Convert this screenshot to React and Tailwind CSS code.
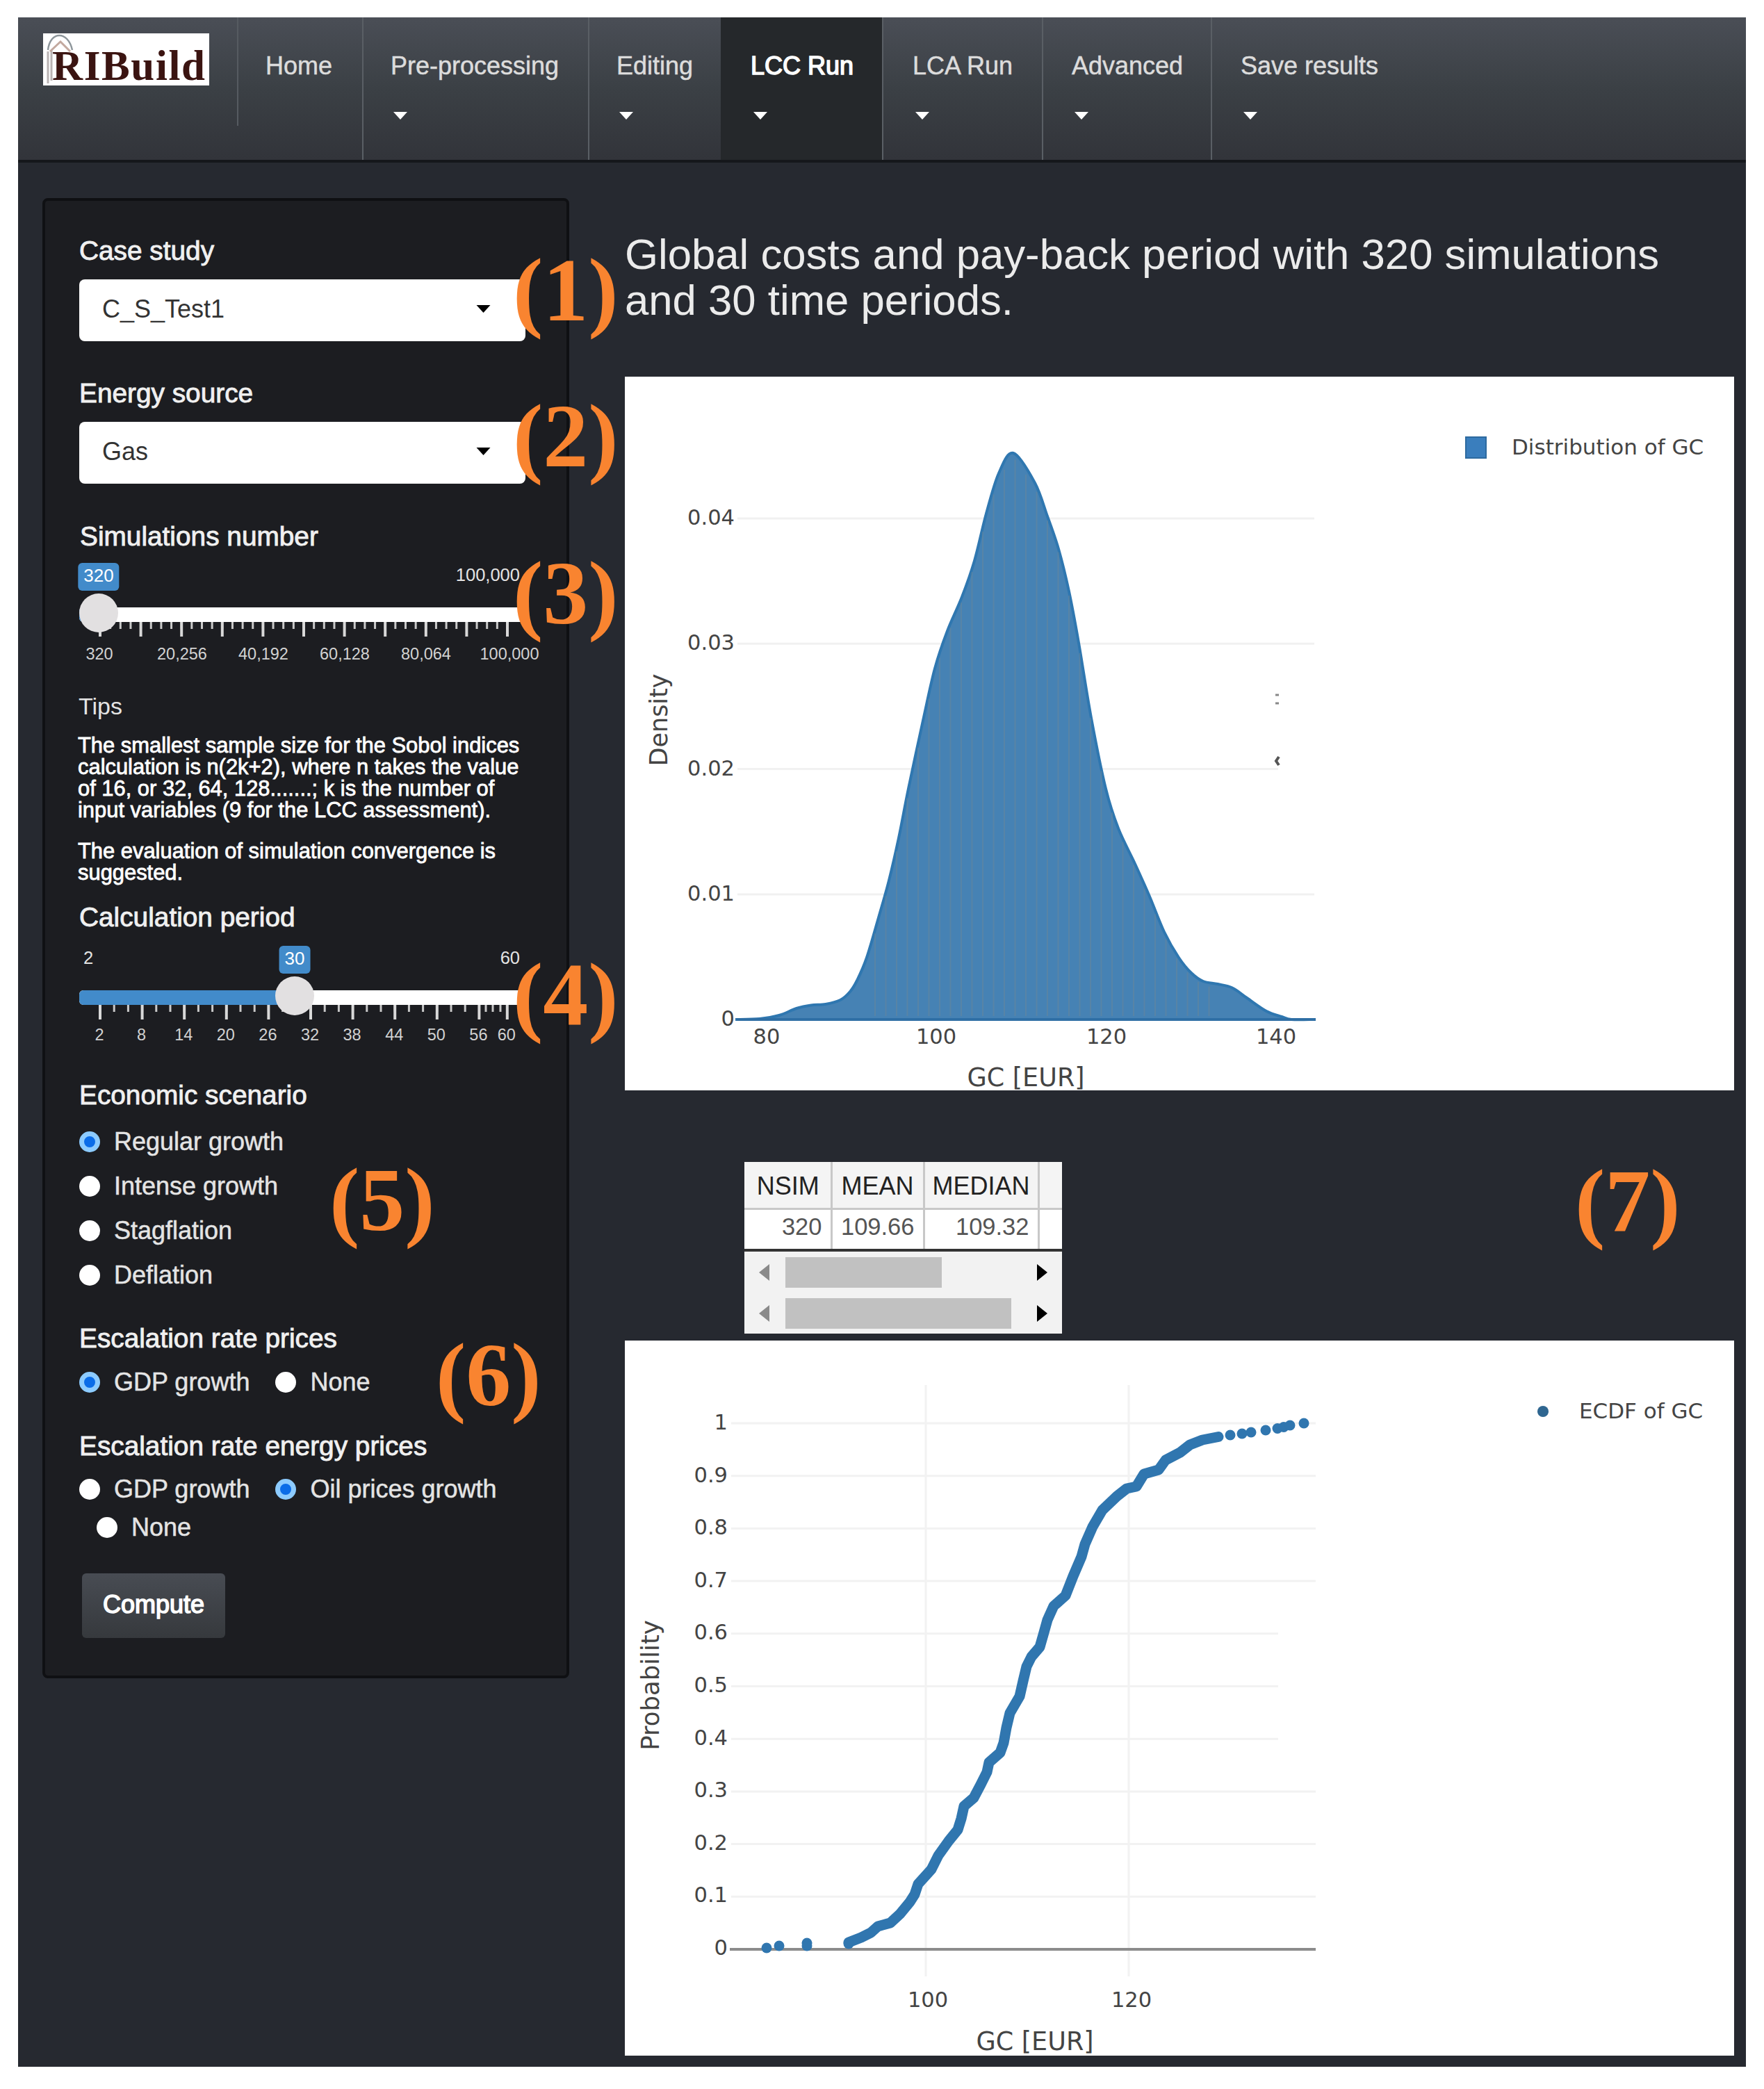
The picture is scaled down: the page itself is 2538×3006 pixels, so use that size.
import React, { useState } from 'react';

const navItems = [
  { name: 'Home', width: 'w-[180px]', menu: false },
  { name: 'Pre-processing', width: 'w-[325px]', menu: true },
  { name: 'Editing', width: 'w-[191px]', menu: true },
  { name: 'LCC Run', width: 'w-[232px]', menu: true },
  { name: 'LCA Run', width: 'w-[230px]', menu: true },
  { name: 'Advanced', width: 'w-[243px]', menu: true },
  { name: 'Save results', width: 'w-[300px]', menu: true },
];

const densityPoints = [
  [159, 925], [194, 924], [222, 919], [247, 909], [268, 904.5], [289, 903], [310, 897], [324, 885],
  [334, 869], [348, 836], [366, 775], [380, 725], [394, 664], [408, 593], [429, 495], [446, 420],
  [464, 366], [485, 317], [503, 265], [520, 197], [538, 139], [559, 110],
  [590, 153], [608, 201], [624, 248], [639, 309], [653, 383], [671, 491], [692, 593], [710, 650],
  [734, 701], [755, 748], [776, 799], [797, 836], [815, 858], [832, 870], [853, 874], [874, 879.5],
  [895, 894], [923, 913], [945, 921], [959, 925], [992, 925],
];

const ecdfLine = [
  [320, 866], [338, 859], [352, 852], [362, 843], [380, 838], [394, 825], [408, 808], [415, 797],
  [420, 782], [439, 761], [449, 741], [464, 720], [477, 704], [482, 688], [486, 670], [500, 658],
  [510, 639], [519, 621], [522, 607], [538, 593], [543, 579], [547, 557], [552, 536], [566, 512],
  [571, 490], [576, 469], [583, 455], [595, 441], [601, 420], [606, 402], [615, 382], [632, 367],
  [643, 339], [655, 311], [660, 293], [671, 268], [685, 244], [706, 224], [720, 213], [734, 210],
  [745, 192], [766, 186], [776, 172], [797, 161], [811, 150], [829, 143], [852, 138.5],
];

const ecdfDots = [
  [202, 874], [220, 871], [260, 867], [260, 871], [320, 868], [869, 136], [886, 134], [899, 132], [920, 129],
  [937, 126.5], [946, 124.5], [955, 122], [975, 119],
];

// Catmull-Rom spline through the points
const smoothPath = (pts) => {
  let d = `M${pts[0][0]} ${pts[0][1]}`;
  for (let i = 0; i < pts.length - 1; i++) {
    const p0 = pts[i - 1] || pts[i];
    const p1 = pts[i];
    const p2 = pts[i + 1];
    const p3 = pts[i + 2] || p2;
    d += ` C${p1[0] + (p2[0] - p0[0]) / 6} ${p1[1] + (p2[1] - p0[1]) / 6} ${p2[0] - (p3[0] - p1[0]) / 6} ${p2[1] - (p3[1] - p1[1]) / 6} ${p2[0]} ${p2[1]}`;
  }
  return d;
};

const Caret = ({ className }) => (
  <svg viewBox="0 0 20 11" className={className}>
    <path d="M0 0H20L10 11Z" fill="currentColor" />
  </svg>
);

const Logo = () => (
  <svg width="239" height="75" viewBox="0 0 239 75" className="overflow-visible bg-white">
    <path d="M7 72V26M12 68V24" stroke="#b9b3b3" strokeWidth="3" />
    <path d="M7 24C10 -4 36 -4 42 24" fill="none" stroke="#8e969b" strokeWidth="2.5" />
    <path d="M10 26L25 12L39 26" fill="none" stroke="#c3a99f" strokeWidth="3" />
    <text x="13" y="67" fontSize="61" textLength="220" fill="#3b1411" fontWeight="bold" fontFamily="'Liberation Serif', serif">
      RIBuild
    </text>
  </svg>
);

const Label = ({ children, className }) => (
  <div className={`h-10 leading-10 text-[38.8px] text-[#f0f0f0] whitespace-nowrap [-webkit-text-stroke:0.9px_#f0f0f0] ${className}`}>
    {children}
  </div>
);

const Select = ({ value }) => (
  <div className="mt-[21px] flex h-[89px] w-[642px] items-center justify-between rounded-lg bg-white pr-[50px] pb-1 pl-[33px] text-[36px] text-[#333]">
    <span>{value}</span>
    <Caret className="h-[11px] w-[21px] text-black" />
  </div>
);

const Radio = ({ label, checked, onChange }) => (
  <label className="flex h-10 items-center gap-5 text-[36px] leading-10 whitespace-nowrap text-[#e4e4e4] [-webkit-text-stroke:0.5px_#e4e4e4]">
    <input type="radio" className="sr-only" checked={checked} onChange={onChange} />
    {checked ? (
      <span className="size-[30px] rounded-full border-[7px] border-[#8ccbff] bg-[#0a6ce8]" />
    ) : (
      <span className="size-[30px] rounded-full bg-white" />
    )}
    {label}
  </label>
);

const Slider = ({ min, max, value, position, majors, minors, labels, labelY, className }) => (
  <div className={`relative w-[642px] ${className}`}>
    <div className="flex h-[38px] items-center justify-between pr-2 pb-2 pl-1.5 text-[25.5px] text-[#e4e4e4]">
      <span>{min}</span>
      <span>{max}</span>
    </div>
    <div className="mt-6 h-[21px] rounded-md bg-white">
      <div className="h-full rounded-l-md bg-[#428bca]" style={{ width: position }} />
    </div>
    <svg width="660" height="60" className="block overflow-visible">
      {minors.map((x) => (
        <path key={x} d={`M${x} 0V10`} stroke="#c9c9c9" strokeWidth="3" />
      ))}
      {majors.map((x) => (
        <path key={x} d={`M${x} 0V21`} stroke="#d8d8d8" strokeWidth="4" />
      ))}
      {labels.map(([x, text]) => (
        <text key={text} x={x} y={labelY} textAnchor="middle" fontSize="23.5" fill="#d2d2d2">
          {text}
        </text>
      ))}
    </svg>
    {/* value bubble and handle sit over the track */}
    <div
      className="absolute -top-0.5 flex h-[40px] -translate-x-1/2 items-center rounded-md bg-[#428bca] px-2 pb-1 text-[26px] leading-none text-white"
      style={{ left: position }}
    >
      {value}
    </div>
    <div className="absolute top-[42px] size-[56px] -translate-x-1/2 rounded-full bg-[#e2e0e1]" style={{ left: position }} />
  </div>
);

const simMajors = Array.from({ length: 11 }, (_, i) => 30 + i * 58.6);
const simMinors = Array.from({ length: 40 }, (_, i) => 30 + i * 14.65);
const simLabels = [[29, '320'], [148, '20,256'], [265, '40,192'], [382, '60,128'], [499, '80,064'], [619, '100,000']];

const yearLabels = ['2', '8', '14', '20', '26', '32', '38', '44', '50', '56', '60'].map((t) => [29 + (Number(t) - 2) * 10.1, t]);
const yearMajors = yearLabels.map(([x]) => x + 1);
const yearMinors = [...Array.from({ length: 27 }, (_, i) => 30 + i * 20.2).filter((x) => x < 570), 585, 595, 606];

const DensityChart = () => (
  <svg width="1596" height="1027" viewBox="0 0 1596 1027" className="mt-[77px] block bg-white" fontFamily="'DejaVu Sans', Verdana, sans-serif" fill="#444">
    {['0.04', '0.03', '0.02', '0.01', '0'].map((t, i) => (
      <g key={t}>
        {t !== '0' && <path d={`M162 ${204 + i * 180.3}H${t === '0.02' ? 940 : 992}`} stroke="#f1f1f1" strokeWidth="3" />}
        <text x="158" y={213 + i * 180.3} textAnchor="end" fontSize="30.5">{t}</text>
      </g>
    ))}
    <path d={smoothPath(densityPoints)} fill="#4682b4" stroke="#2f77b0" strokeWidth="4" />
    <path d="M161 925H994" stroke="#2f6fa5" strokeWidth="4" />
    {Array.from({ length: 32 }, (_, i) => 360 + i * 15.5).map((x) => {
      const next = densityPoints.findIndex((p) => p[0] > x);
      const [ax, ay] = densityPoints[next - 1];
      const [bx, by] = densityPoints[next];
      return <path key={x} d={`M${x} ${ay + ((by - ay) * (x - ax)) / (bx - ax) + 6}V920`} stroke="#6f8796" strokeWidth="2" opacity="0.45" />;
    })}
    {[[204, '80'], [448, '100'], [693, '120'], [937, '140']].map(([x, t]) => (
      <text key={t} x={x} y="960" textAnchor="middle" fontSize="30.5">{t}</text>
    ))}
    <text x="577" y="1021" textAnchor="middle" fontSize="36.5">GC [EUR]</text>
    <text transform="translate(61 494) rotate(-90)" textAnchor="middle" fontSize="35">Density</text>
    <path d="M936 458H941M936 470H941" stroke="#888" strokeWidth="3" />
    <path d="M941 547L937 553L941 559" fill="none" stroke="#555" strokeWidth="4" />
    <rect x="1210" y="87" width="29" height="30" fill="#3a7ebd" stroke="#2d6a9f" strokeWidth="2" />
    <text x="1276" y="112" fontSize="31">Distribution of GC</text>
  </svg>
);

const EcdfChart = () => (
  <svg width="1596" height="1029" viewBox="0 0 1596 1029" className="mt-[10px] block bg-white" fontFamily="'DejaVu Sans', Verdana, sans-serif" fill="#444">
    <path d="M433 64V915M725 64V915" stroke="#f2f2f2" strokeWidth="3" />
    {['1', '0.9', '0.8', '0.7', '0.6', '0.5', '0.4', '0.3', '0.2', '0.1', '0'].map((t, i) => (
      <g key={t}>
        {t !== '0' && <path d={`M153 ${119 + i * 75.7}H${i > 3 && i < 7 ? 940 : 994}`} stroke="#f2f2f2" strokeWidth="3" />}
        <text x="148" y={128 + i * 75.6} textAnchor="end" fontSize="30.5">{t}</text>
      </g>
    ))}
    <path d="M151 876H994" stroke="#8c8c8c" strokeWidth="4" />
    <g transform="translate(2 0)">
      <path d={`M${ecdfLine.map((p) => p.join(' ')).join('L')}`} fill="none" stroke="#3076af" strokeWidth="15" strokeLinecap="round" strokeLinejoin="round" />
      {ecdfDots.map(([x, y]) => (
        <circle key={`${x}-${y}`} cx={x} cy={y} r="7.5" fill="#3076af" />
      ))}
    </g>
    <text x="436" y="959" textAnchor="middle" fontSize="30.5">100</text>
    <text x="729" y="959" textAnchor="middle" fontSize="30.5">120</text>
    <text x="590" y="1021" textAnchor="middle" fontSize="36.5">GC [EUR]</text>
    <text transform="translate(49 496) rotate(-90)" textAnchor="middle" fontSize="35.5">Probability</text>
    <circle cx="1321" cy="102" r="8" fill="#2f6690" />
    <text x="1373" y="112" fontSize="31">ECDF of GC</text>
  </svg>
);

const ScrollBar = ({ thumb }) => (
  <div className="flex h-[59px] items-center pl-[21px]">
    <svg width="15" height="24" viewBox="0 0 15 24"><path d="M15 0V24L0 12Z" fill="#8a8a8a" /></svg>
    <div className="ml-[23px] w-[362px]">
      <div className={`h-11 bg-[#c1c1c1] ${thumb}`} />
    </div>
    <svg width="15" height="24" viewBox="0 0 15 24"><path d="M0 0V24L15 12Z" fill="#000" /></svg>
  </div>
);

const StatsTable = () => (
  <div className="mt-[103px] ml-[172px] h-[247px] w-[457px] bg-[#f2f2f2]">
    <table className="w-full table-fixed border-collapse text-[36px] leading-10">
      <thead>
        <tr className="h-[67px] border-b-[3px] border-[#c8c8c8] bg-[#f4f4f4] text-[#222]">
          <th className="w-[125px] border-r-[3px] border-[#c8c8c8] p-0 pt-1 pl-0.5 font-normal">NSIM</th>
          <th className="w-[133px] border-r-[3px] border-[#c8c8c8] p-0 pt-1 font-normal">MEAN</th>
          <th className="w-[165px] border-r-[3px] border-[#c8c8c8] p-0 pt-1 font-normal">MEDIAN</th>
          <th className="p-0" />
        </tr>
      </thead>
      <tbody>
        <tr className="h-[58px] bg-white text-right text-[34.5px] text-[#555]">
          <td className="border-r-[3px] border-[#c8c8c8] p-0 pr-3 pb-2">320</td>
          <td className="border-r-[3px] border-[#c8c8c8] p-0 pr-3 pb-2">109.66</td>
          <td className="border-r-[3px] border-[#c8c8c8] p-0 pr-3 pb-2">109.32</td>
          <td className="p-0" />
        </tr>
      </tbody>
    </table>
    <div className="h-[4px] bg-[#333]" />
    <ScrollBar thumb="w-[225px]" />
    <ScrollBar thumb="w-[325px]" />
  </div>
);

const Marker = ({ children, className }) => (
  <div className={`absolute font-['Liberation_Serif',serif] text-[130px] leading-none font-bold text-[#f98430] ${className}`}>{children}</div>
);

const App = () => {
  const [scenario, setScenario] = useState('Regular growth');
  const [rate, setRate] = useState('GDP growth');
  const [energyRate, setEnergyRate] = useState('Oil prices growth');

  return (
    <div className="h-[3006px] w-[2538px] bg-white pt-[25px] pl-[26px] font-['Liberation_Sans',Arial,sans-serif]">
      <div className="relative h-[2949px] w-[2486px] bg-[#262930]">
        <nav className="flex h-[209px] border-b-4 border-[#15171b] bg-linear-to-b from-[#4a4e56] via-[#3b4045] to-[#32343a]">
          <div className="h-[156px] w-[315px] pt-[23px] pl-9">
            <Logo />
          </div>
          {navItems.map((item) => (
            <div
              key={item.name}
              className={`border-l-2 pt-[50px] text-[36px] leading-10 whitespace-nowrap ${item.width} ${item.name === 'Home' ? 'h-[156px] border-[#565b61]' : 'h-[205px] border-[#5a5f65]'} ${
                item.name === 'LCC Run'
                  ? 'border-[#25282b] bg-[#25282b] pl-[41px] text-white [-webkit-text-stroke:1.5px_#fff]'
                  : 'pl-[39px] text-[#dcdcdc] [-webkit-text-stroke:0.5px_#dcdcdc]'
              } ${item.name === 'LCA Run' ? 'pl-[42px]' : ''} ${item.name === 'Advanced' || item.name === 'Save results' ? 'pl-[41px]' : ''}`}
            >
              <div>{item.name}</div>
              {item.menu && <Caret className="mt-[46px] ml-1 h-[11px] w-5 text-white" />}
            </div>
          ))}
        </nav>

        <div className="flex pl-[35px]">
          <aside className="mt-[51px] h-[2130px] w-[758px] rounded-lg border-4 border-[#0f1013] bg-[#1c1d21] pl-[49px]">
            <Label className="mt-[52px]">Case study</Label>
            <Select value="C_S_Test1" />
            <Label className="mt-[55px]">Energy source</Label>
            <Select value="Gas" />
            <Label className="mt-[56px] pl-px">Simulations number</Label>
            <Slider className="mt-5" max="100,000" value="320" position={28} majors={simMajors} minors={simMinors} labels={simLabels} labelY={54} />

            <div className="mt-[41px] -ml-px h-10 text-[34px] leading-10 text-[#e4e4e4]">Tips</div>
            <div className="-ml-0.5 text-[30.9px] leading-[31px] whitespace-nowrap text-white [-webkit-text-stroke:0.8px_#fff]">
              <p className="mt-[21px]">
                The smallest sample size for the Sobol indices<br />
                calculation is n(2k+2), where n takes the value<br />
                of 16, or 32, 64, 128.......; k is the number of<br />
                input variables (9 for the LCC assessment).
              </p>
              <p className="mt-[28px]">
                The evaluation of simulation convergence is<br />
                suggested.
              </p>
            </div>

            <Label className="mt-[29px]">Calculation period</Label>
            <Slider className="mt-[23px]" min="2" max="60" value="30" position={310} majors={yearMajors} minors={yearMinors} labels={yearLabels} labelY={51} />

            <Label className="mt-[50px]">Economic scenario</Label>
            <div className="mt-[27px] flex flex-col gap-6">
              {['Regular growth', 'Intense growth', 'Stagflation', 'Deflation'].map((s) => (
                <Radio key={s} label={s} checked={scenario === s} onChange={() => setScenario(s)} />
              ))}
            </div>

            <Label className="mt-[51px]">Escalation rate prices</Label>
            <div className="mt-[23px] flex gap-[37px]">
              {['GDP growth', 'None'].map((r) => (
                <Radio key={r} label={r} checked={rate === r} onChange={() => setRate(r)} />
              ))}
            </div>

            <Label className="mt-[52px]">Escalation rate energy prices</Label>
            <div className="mt-[22px] flex gap-[37px]">
              {['GDP growth', 'Oil prices growth'].map((r) => (
                <Radio key={r} label={r} checked={energyRate === r} onChange={() => setEnergyRate(r)} />
              ))}
            </div>
            <div className="mt-[15px] pl-[25px]">
              <Radio label="None" checked={energyRate === 'None'} onChange={() => setEnergyRate('None')} />
            </div>

            <button className="mt-[46px] ml-1 h-[93px] w-[206px] rounded-md bg-linear-to-b from-[#484c53] to-[#36393d] pb-1 text-[36px] text-white [-webkit-text-stroke:1.5px_#fff]">
              Compute
            </button>
          </aside>

          <main className="ml-20 w-[1596px] pt-[99px]">
            <h1 className="text-[61.7px] leading-[66px] whitespace-nowrap text-[#ebebeb]">
              Global costs and pay-back period with 320 simulations<br />
              and 30 time periods.
            </h1>
            <DensityChart />
            <StatsTable />
            <EcdfChart />
          </main>
        </div>

        {/* numbered callouts over the panels */}
        <Marker className="top-[327px] left-[712px]">(1)</Marker>
        <Marker className="top-[537px] left-[712px]">(2)</Marker>
        <Marker className="top-[763px] left-[712px]">(3)</Marker>
        <Marker className="top-[1341px] left-[712px]">(4)</Marker>
        <Marker className="top-[1636px] left-[448px]">(5)</Marker>
        <Marker className="top-[1888px] left-[601px]">(6)</Marker>
        <Marker className="top-[1638px] left-[2240px]">(7)</Marker>
      </div>
    </div>
  );
};

export default App;
